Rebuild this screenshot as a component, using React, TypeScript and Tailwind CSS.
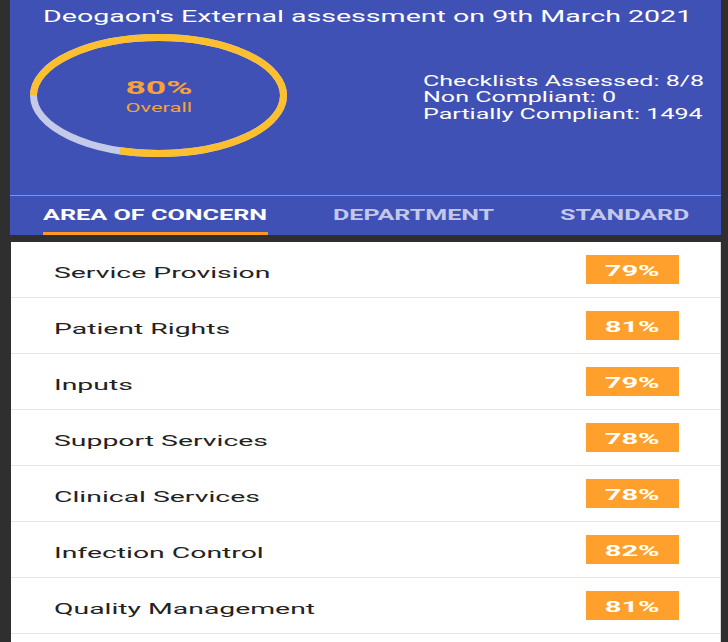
import React from "react"

const rows = [
  { name: "Service Provision", score: 79 },
  { name: "Patient Rights", score: 81 },
  { name: "Inputs", score: 79 },
  { name: "Support Services", score: 78 },
  { name: "Clinical Services", score: 78 },
  { name: "Infection Control", score: 82 },
  { name: "Quality Management", score: 81 },
]

function ScoreRing() {
  // 80% arc, starting at 9 o'clock going clockwise
  return (
    <div className="relative w-[259px] h-[123px] shrink-0">
      <svg className="absolute inset-0" width="259" height="123" viewBox="0 0 259 123">
        <ellipse cx="129.5" cy="61.5" rx="125" ry="58" fill="none" stroke="#c5cae9" strokeWidth="7" />
        <path
          d="M 4.5 61.5 A 125 58 0 0 1 254.5 61.5 A 125 58 0 0 1 90.9 116.7"
          fill="none"
          stroke="#fdbf2d"
          strokeWidth="7"
        />
      </svg>
      <div className="absolute inset-0 flex flex-col items-center justify-center pt-[2px]">
        <span className="inline-block scale-x-[1.97] text-[18px] font-bold leading-[22px] text-[#f9a233]">80%</span>
        <span className="inline-block scale-x-[1.68] text-[13px] leading-[18px] text-[#f9a233]">Overall</span>
      </div>
    </div>
  )
}

export default function App() {
  return (
    <div className="w-[728px] h-[642px] overflow-hidden bg-[#2f2f2f] flex pl-[10px] pr-[7px] font-['Roboto',sans-serif]">
      <div className="flex-1 flex flex-col">
        {/* Header */}
        <div className="h-[195px] bg-[#3f51b5] flex flex-col">
          <div className="pl-[33px] pt-[5px] h-[34px]">
            <span className="inline-block origin-left scale-x-[1.68] text-[17px] leading-[22px] text-white whitespace-nowrap">
              Deogaon's External assessment on 9th March 2021
            </span>
          </div>
          <div className="flex items-center pl-[19px]">
            <ScoreRing />
            <div className="ml-[135px] pt-[4px] flex flex-col text-[15px] leading-[16.5px] text-white whitespace-nowrap">
              <span className="inline-block origin-left scale-x-[1.67]">Checklists Assessed: 8/8</span>
              <span className="inline-block origin-left scale-x-[1.67]">Non Compliant: 0</span>
              <span className="inline-block origin-left scale-x-[1.67]">Partially Compliant: 1494</span>
            </div>
          </div>
        </div>
        <div className="h-px bg-[#8791d0]" />

        {/* Tabs */}
        <div className="h-[39px] bg-[#3f51b5] flex text-[14px] font-bold whitespace-nowrap">
          <div className="relative ml-[33px] w-[225px] flex items-center">
            <span className="inline-block origin-left scale-x-[1.8] text-white">AREA OF CONCERN</span>
            <div className="absolute left-0 right-0 bottom-0 h-[3px] bg-[#ff9a1f]" />
          </div>
          <div className="ml-[65px] flex items-center">
            <span className="inline-block origin-left scale-x-[1.79] text-[#c3c8ea]">DEPARTMENT</span>
          </div>
          <div className="ml-auto mr-[33px] w-[128px] flex items-center">
            <span className="inline-block origin-left scale-x-[1.79] text-[#c3c8ea]">STANDARD</span>
          </div>
        </div>

        <div className="h-[7px]" />

        {/* List */}
        <div className="flex-1 bg-white ml-px border-r border-[#d9d9d9]">
          {rows.map((r) => (
            <div key={r.name} className="h-[56px] border-b border-[#e6e6e6] flex items-center pl-[43px] pr-[41px]">
              <span className="inline-block mt-[6px] origin-left scale-x-[1.89] text-[15px] leading-[20px] text-[#222222] whitespace-nowrap">
                {r.name}
              </span>
              <div className="ml-auto w-[93px] h-[29px] bg-[#ff9f2c] flex items-center justify-center pt-[3px]">
                <span className="inline-block scale-x-[1.94] text-[15px] leading-[20px] font-bold text-white">{r.score}%</span>
              </div>
            </div>
          ))}
        </div>
      </div>
    </div>
  )
}
